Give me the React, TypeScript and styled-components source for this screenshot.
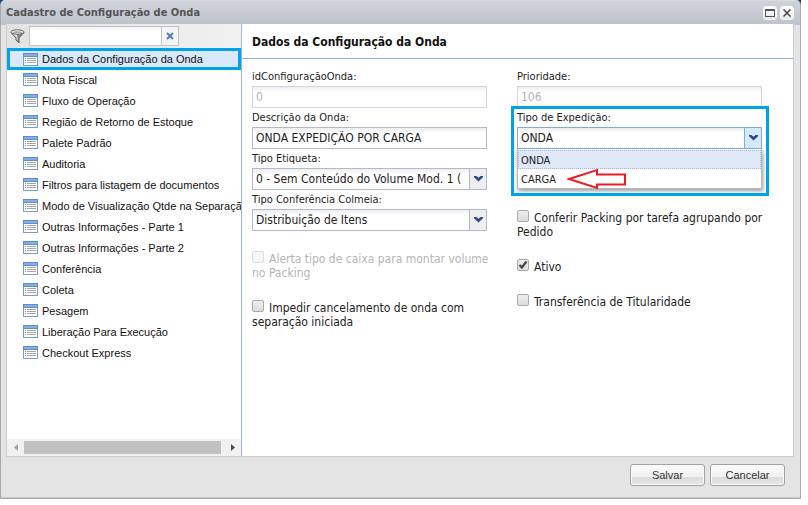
import React from "react";
import styled, { createGlobalStyle } from "styled-components";

const uiFont = `Tahoma, "DejaVu Sans Condensed", "Noto Sans", sans-serif`;
const arial = `"Liberation Sans", Arial, sans-serif`;

const GlobalStyle = createGlobalStyle`
  *, *::before, *::after { box-sizing: border-box; }
  body { margin: 0; background: #fff; font-family: ${uiFont}; font-size: 12px; color: #222; }
  button, input, select { font: inherit; color: inherit; }
`;

const Page = styled.div`
  min-height: 100vh;
  padding: 0 7px 6px 0;
  display: flex;
`;

const Backdrop = styled.div`
  flex: 1;
  min-width: 0;
  display: flex;
  background: linear-gradient(#173f80 0 28px, #b8c4d6 28px 32px, #d9d9d9 32px 36px, #c4c4c4 36px);
`;

const Window = styled.section`
  flex: 1;
  min-width: 0;
  display: flex;
  flex-direction: column;
  border: 1px solid #aaa;
  border-top-color: #d8dae0;
  border-radius: 5px 5px 2px 2px;
  background: linear-gradient(#d0d3da, #bec2cb 24px, #e4e4e4 24px);
  box-shadow: inset 0 -1px 0 #c8c8c8;
  padding: 0 6px 0 5px;
`;

const TitleBar = styled.header`
  height: 23px;
  display: flex;
  align-items: center;
  justify-content: space-between;
`;

const Title = styled.h1`
  margin: 0;
  font-size: 11px;
  line-height: 14px;
  font-weight: bold;
  color: #555;
`;

const Tools = styled.div`
  display: flex;
  gap: 3px;
`;

const ToolButton = styled.button`
  width: 14px;
  height: 14px;
  padding: 0;
  display: grid;
  place-items: center;
  border: 1px solid #f8f8f8;
  border-radius: 3px;
  background: linear-gradient(#fff, #e6e6e6);
`;

const Body = styled.div`
  flex: 1;
  min-height: 0;
  display: flex;
  border: 1px solid #ccc;
  border-top: 0;
  background: #fff;
`;

const Sidebar = styled.nav`
  flex: 0 0 235px;
  min-width: 0;
  display: flex;
  flex-direction: column;
  border-right: 1px solid #99b4e6;
  font-family: ${arial};
  font-size: 11px;
`;

const FilterBar = styled.div`
  height: 24px;
  display: flex;
  align-items: center;
  padding-left: 3px;
  background: linear-gradient(90deg, #e2e2e2, #f1f1f1);
`;

const FilterInput = styled.input`
  width: 133px;
  height: 20px;
  margin-left: 4px;
  padding: 0 4px;
  border: 1px solid #c3c3ce;
  background: linear-gradient(#f0f2f3, #fff 4px);
`;

const ClearButton = styled.button`
  width: 17px;
  height: 20px;
  padding: 0;
  display: grid;
  place-items: center;
  border: 1px solid #c3c3ce;
  border-left: 0;
  background: #f4f4f4;
`;

const Tree = styled.ul`
  flex: 1;
  margin: 0;
  padding: 0;
  list-style: none;
  overflow: hidden;
`;

const TreeItem = styled.li<{ $active?: boolean }>`
  height: ${(p) => (p.$active ? 22 : 21)}px;
  margin-bottom: ${(p) => (p.$active ? -1 : 0)}px;
  display: flex;
  align-items: center;
  padding-left: ${(p) => (p.$active ? 13 : 16)}px;
  border: ${(p) => (p.$active ? "3px solid #00a2e8" : "0")};
  background: ${(p) => (p.$active ? "#d9e8fb" : "transparent")};
`;

const TreeLink = styled.a`
  display: flex;
  align-items: center;
  gap: 4px;
  color: #111;
  text-decoration: none;
  white-space: nowrap;
`;

const ScrollBar = styled.div`
  height: 17px;
  display: flex;
  align-items: center;
  background: #f1f1f1;
`;

const ScrollArrow = styled.button`
  width: 17px;
  height: 17px;
  padding: 0;
  display: grid;
  place-items: center;
  border: 0;
  background: transparent;
`;

const ScrollTrack = styled.div`
  flex: 1;
  height: 13px;
  padding-right: 3px;
`;

const ScrollThumb = styled.div`
  height: 100%;
  background: #c1c1c1;
`;

const Content = styled.main`
  flex: 1;
  min-width: 0;
`;

const PanelHeading = styled.h2`
  height: 35px;
  margin: 0;
  padding-left: 10px;
  border-bottom: 1px solid #8db2e3;
  font-size: 12px;
  line-height: 36px;
  font-weight: bold;
  color: #111;
`;

const Form = styled.form`
  display: grid;
  grid-template-columns: 235fr 245fr;
  column-gap: 30px;
  padding: 8px 31px 0 10px;
  align-items: start;
`;

const Column = styled.div`
  min-width: 0;
`;

const Field = styled.div`
  position: relative;
`;

const FieldLabel = styled.label`
  display: block;
  height: 19px;
  font-size: 11px;
  line-height: 19px;
  white-space: nowrap;
`;

const TextInput = styled.input`
  display: block;
  width: 100%;
  height: 22px;
  padding: 0 3px;
  border: 1px solid #b5b8c8;
  border-radius: 0;
  background: linear-gradient(#eceff0, #fff 5px);
  &:disabled { color: #b4b4b4; border-color: #d3d4de; }
`;

const SelectBox = styled.div`
  position: relative;
  height: 22px;
`;

const Select = styled.select<{ $open?: boolean }>`
  appearance: none;
  display: block;
  width: 100%;
  height: 22px;
  padding: 0 20px 0 3px;
  border: 1px solid ${(p) => (p.$open ? "#7eadd9" : "#b5b8c8")};
  border-radius: 0;
  background: linear-gradient(#eceff0, #fff 5px);
`;

const Trigger = styled.span<{ $open?: boolean }>`
  position: absolute;
  inset: 0 0 0 auto;
  width: 18px;
  display: grid;
  place-items: center;
  border: 1px solid ${(p) => (p.$open ? "#7eadd9" : "#b5b8c8")};
  border-top-right-radius: 2px;
  background: ${(p) => (p.$open ? "#d6e8fb" : "#eeeef0")};
  pointer-events: none;
`;

const Options = styled.ul`
  position: absolute;
  z-index: 1;
  top: 100%;
  left: 0;
  right: 0;
  margin: 0;
  padding: 1px 0 0;
  list-style: none;
  background: #fff;
  border: 1px solid #b8b8c4;
  border-top: 0;
  box-shadow: 1px 2px 4px #999;
  font-size: 11px;
`;

const Option = styled.li<{ $active?: boolean }>`
  height: 19px;
  padding: 0 2px;
  line-height: 19px;
  border: 1px ${(p) => (p.$active ? "dotted #a3bae9" : "solid transparent")};
  background: ${(p) => (p.$active ? "#dfe8f6" : "#fff")};
`;

const Highlight = styled.div`
  position: absolute;
  z-index: 2;
  inset: -2px -7px -47px -6px;
  border: 3px solid #00a2e8;
  pointer-events: none;
`;

const Pointer = styled.svg`
  position: absolute;
  z-index: 3;
  left: 50px;
  top: 59px;
`;

const Checks = styled.div<{ $offset: number }>`
  display: grid;
  gap: 21px;
  margin: ${(p) => p.$offset}px -14px 0 0;
`;

const CheckLabel = styled.label<{ $muted?: boolean }>`
  display: block;
  line-height: 14px;
  color: ${(p) => (p.$muted ? "#b5b5b5" : "#222")};
`;

const CheckBox = styled.input`
  appearance: none;
  float: left;
  width: 12px;
  height: 12px;
  margin: -1px 5px 0 0;
  border: 1px solid #a9a9a9;
  border-radius: 2px;
  background: linear-gradient(#eee, #dcdcdc);
  &:disabled { border-color: #ddd; background: #f6f6f6; }
  &:checked {
    background: url("data:image/svg+xml,%3Csvg xmlns='http://www.w3.org/2000/svg' viewBox='0 0 10 10'%3E%3Cpath d='M1.5 5l2.3 2.5L8.5 1.500' fill='none' stroke='%23444' stroke-width='2.2'/%3E%3C/svg%3E"), linear-gradient(#eee, #dcdcdc);
  }
`;

const Footer = styled.footer`
  display: flex;
  justify-content: flex-end;
  gap: 5px;
  padding: 7px 9px 12px;
`;

const FooterButton = styled.button`
  width: 75px;
  height: 22px;
  padding: 0;
  border: 1px solid #a2a2a2;
  border-radius: 3px;
  background: linear-gradient(#fbfbfb, #f0f0f0 12px, #dcdcdc 12px, #e6e6e6);
  box-shadow: inset 0 0 0 1px #fafafa;
  font-family: ${arial};
  font-size: 11px;
  color: #333;
`;

const sections = [
  "Dados da Configuração da Onda",
  "Nota Fiscal",
  "Fluxo de Operação",
  "Região de Retorno de Estoque",
  "Palete Padrão",
  "Auditoria",
  "Filtros para listagem de documentos",
  "Modo de Visualização Qtde na Separação",
  "Outras Informações - Parte 1",
  "Outras Informações - Parte 2",
  "Conferência",
  "Coleta",
  "Pesagem",
  "Liberação Para Execução",
  "Checkout Express",
];

const FormIcon = () => (
  <svg width="15" height="13" viewBox="0 0 15 13" shapeRendering="crispEdges" aria-hidden="true">
    <rect x="0.5" y="0.5" width="14" height="12" fill="#fff" stroke="#7c9cc8" />
    <rect x="0" y="0" width="15" height="4" fill="#5f8ccb" />
    <rect x="1" y="1" width="13" height="2" fill="#86aee4" />
    <path d="M2 5.5h1M2 7.5h1M2 9.5h1" stroke="#5c9be0" />
    <path d="M4 5.5h9M4 7.5h9M4 9.5h9" stroke="#a5a5a5" />
  </svg>
);

const FunnelIcon = () => (
  <svg width="15" height="15" viewBox="0 0 15 15" aria-hidden="true">
    <path d="M1 3.500L6 9v2l3 3V9l5-5.500z" fill="#8c8c8c" stroke="#606060" />
    <path d="M3 5h3.500L7.500 9v2.500L6.500 10.500V8.500z" fill="#e8e8e8" />
    <ellipse cx="7.5" cy="3" rx="6.5" ry="2.2" fill="#f4f4f4" stroke="#666" />
    <ellipse cx="7.5" cy="3.200" rx="4.500" ry="1" fill="#aaa" />
  </svg>
);

const Chevron = () => (
  <svg width="9" height="6" viewBox="0 0 9 6" aria-hidden="true">
    <path d="M0 0h2.5l2 1.8 2-1.8H9v1.2L4.5 5.5 0 1.2z" fill="#2b4a8b" />
  </svg>
);

type SelectFieldProps = { id: string; label: string; value: string; options?: string[] };

const SelectField = ({ id, label, value, options }: SelectFieldProps) => (
  <Field>
    <FieldLabel htmlFor={id}>{label}</FieldLabel>
    <SelectBox>
      <Select id={id} defaultValue={value} $open={!!options}>
        {(options ?? [value]).map((o) => (
          <option key={o}>{o}</option>
        ))}
      </Select>
      <Trigger $open={!!options}>
        <Chevron />
      </Trigger>
    </SelectBox>
    {options && (
      <>
        <Options role="listbox" aria-label={label}>
          {options.map((o) => (
            <Option key={o} role="option" aria-selected={o === value} $active={o === value}>
              {o}
            </Option>
          ))}
        </Options>
        <Highlight />
        <Pointer width="60" height="24" viewBox="0 0 60 24" aria-hidden="true">
          <path d="M2 12L30 3v4.5h28v10H30V21z" fill="#fff" stroke="#ed1c24" strokeWidth="2" />
        </Pointer>
      </>
    )}
  </Field>
);

type TextFieldProps = { id: string; label: string; value: string; disabled?: boolean };

const TextField = ({ id, label, value, disabled }: TextFieldProps) => (
  <Field>
    <FieldLabel htmlFor={id}>{label}</FieldLabel>
    <TextInput id={id} defaultValue={value} disabled={disabled} />
  </Field>
);

type CheckProps = { label: string; checked?: boolean; disabled?: boolean };

const Check = ({ label, checked, disabled }: CheckProps) => (
  <CheckLabel $muted={disabled}>
    <CheckBox type="checkbox" defaultChecked={checked} disabled={disabled} />
    {label}
  </CheckLabel>
);

export default function App() {
  return (
    <>
      <GlobalStyle />
      <Page>
        <Backdrop>
          <Window>
            <TitleBar>
              <Title>Cadastro de Configuração de Onda</Title>
              <Tools>
                <ToolButton aria-label="Maximizar">
                  <svg width="10" height="8" viewBox="0 0 10 8" shapeRendering="crispEdges">
                    <path d="M.5 .5h9v7h-9zM0 1.5h10" fill="none" stroke="#555" />
                  </svg>
                </ToolButton>
                <ToolButton aria-label="Fechar">
                  <svg width="8" height="8" viewBox="0 0 8 8">
                    <path d="M.5 .5l7 7M7.5 .5l-7 7" stroke="#444" strokeWidth="1.5" />
                  </svg>
                </ToolButton>
              </Tools>
            </TitleBar>
            <Body>
              <Sidebar>
                <FilterBar>
                  <FunnelIcon />
                  <FilterInput aria-label="Filtrar" />
                  <ClearButton aria-label="Limpar filtro">
                    <svg width="8" height="8" viewBox="0 0 8 8">
                      <path d="M1 1l6 6M7 1L1 7" stroke="#4f7fb8" strokeWidth="2" />
                    </svg>
                  </ClearButton>
                </FilterBar>
                <Tree>
                  {sections.map((s, i) => (
                    <TreeItem key={s} $active={i === 0}>
                      <TreeLink href="#">
                        <FormIcon />
                        {s}
                      </TreeLink>
                    </TreeItem>
                  ))}
                </Tree>
                <ScrollBar>
                  <ScrollArrow aria-label="Rolar para a esquerda">
                    <svg width="4" height="7" viewBox="0 0 4 7">
                      <path d="M4 0v7L0 3.5z" fill="#a3a3a3" />
                    </svg>
                  </ScrollArrow>
                  <ScrollTrack>
                    <ScrollThumb />
                  </ScrollTrack>
                  <ScrollArrow aria-label="Rolar para a direita">
                    <svg width="4" height="7" viewBox="0 0 4 7">
                      <path d="M0 0v7l4-3.5z" fill="#505050" />
                    </svg>
                  </ScrollArrow>
                </ScrollBar>
              </Sidebar>
              <Content>
                <PanelHeading>Dados da Configuração da Onda</PanelHeading>
                <Form>
                  <Column>
                    <TextField id="codigo" label="idConfiguraçãoOnda:" value="0" disabled />
                    <TextField id="descricao" label="Descrição da Onda:" value="ONDA EXPEDIÇÃO POR CARGA" />
                    <SelectField id="etiqueta" label="Tipo Etiqueta:" value="0 - Sem Conteúdo do Volume Mod. 1 (" />
                    <SelectField id="colmeia" label="Tipo Conferência Colmeia:" value="Distribuição de Itens" />
                    <Checks $offset={21}>
                      <Check label="Alerta tipo de caixa para montar volume no Packing" disabled />
                      <Check label="Impedir cancelamento de onda com separação iniciada" />
                    </Checks>
                  </Column>
                  <Column>
                    <TextField id="prioridade" label="Prioridade:" value="106" disabled />
                    <SelectField id="expedicao" label="Tipo de Expedição:" value="ONDA" options={["ONDA", "CARGA"]} />
                    <Checks $offset={62}>
                      <Check label="Conferir Packing por tarefa agrupando por Pedido" />
                      <Check label="Ativo" checked />
                      <Check label="Transferência de Titularidade" />
                    </Checks>
                  </Column>
                </Form>
              </Content>
            </Body>
            <Footer>
              <FooterButton>Salvar</FooterButton>
              <FooterButton>Cancelar</FooterButton>
            </Footer>
          </Window>
        </Backdrop>
      </Page>
    </>
  );
}
